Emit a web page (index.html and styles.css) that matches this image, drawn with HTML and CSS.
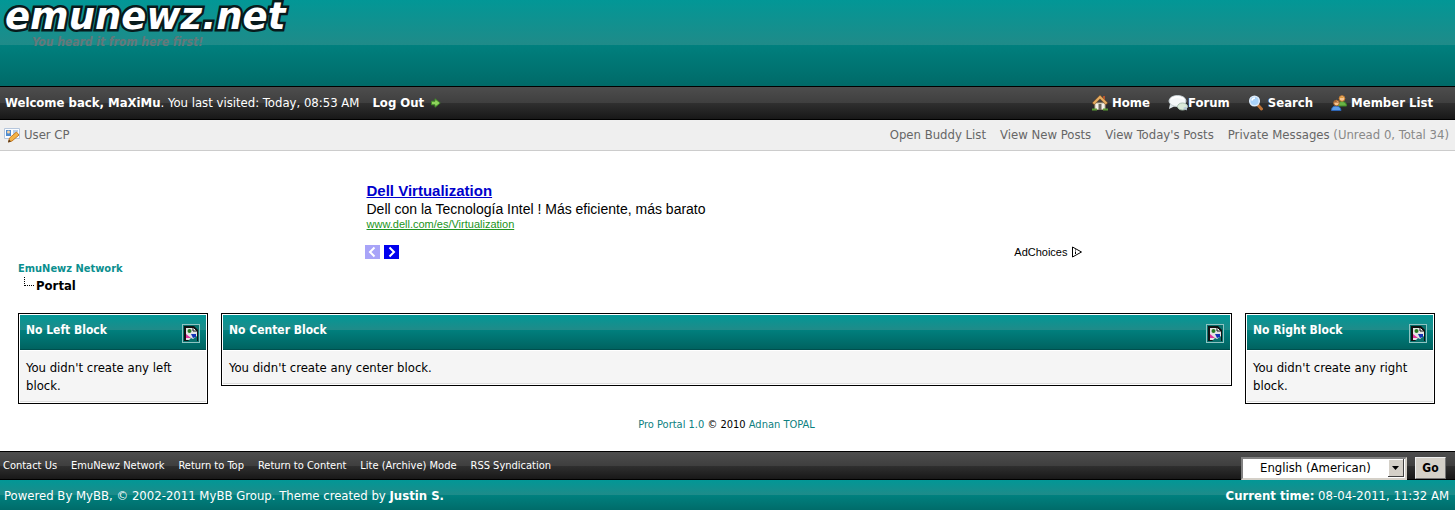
FILE: index.html
```
<!DOCTYPE html>
<html lang="en">
<head>
  <meta charset="UTF-8">
  <title>EmuNewz Network - Portal</title>
  <link rel="stylesheet" href="styles.css">
</head>
<body>

  <header class="header" id="top">
    <a class="logo" href="#">emunewz.net</a>
    <p class="slogan">You heard it from here first!</p>
  </header>

  <div class="menu">
    <div class="welcome">
      <span><strong>Welcome back, MaXiMu</strong>. You last visited: Today, 08:53 AM</span>
      <a class="logout" href="#">Log Out
        <svg width="10" height="10" viewBox="0 0 10 10"><path d="M.5 3.2H4V.8L9.2 5 4 9.2V6.8H.5z" fill="#8ed35c" stroke="#3f8a27"/></svg>
      </a>
    </div>
    <nav class="menu-links">
      <a href="#">
        <svg width="16" height="16" viewBox="0 0 16 16">
          <path d="M3 8h10v6.500H3z" fill="#f4f1e8" stroke="#b9ab8b"/>
          <path d="M11 1h2v4h-2z" fill="#b5552d"/>
          <path d="M1 9l7-7 7 7" fill="none" stroke="#8c5a26" stroke-width="3"/>
          <path d="M1.500 8.500L8 2l6.500 6.500" fill="none" stroke="#e6ad62" stroke-width="2"/>
          <path d="M6.500 9h3v6h-3z" fill="#6e675d"/>
          <path d="M0 14.500h5M11 14.500h5" stroke="#5a9b35" stroke-width="2"/>
        </svg>
        <span>Home</span>
      </a>
      <a class="forum" href="#">
        <svg width="20" height="16" viewBox="0 0 20 16">
          <path d="M2 9l-1 5 6-3z" fill="#dfe9ec"/>
          <ellipse cx="9.500" cy="6" rx="8.500" ry="5.500" fill="#f3f7f8" stroke="#c8d3d6"/>
          <path d="M3 4q6-4 13 0" fill="none" stroke="#fff" stroke-width="2"/>
          <ellipse cx="14.500" cy="11.500" rx="5" ry="3.500" fill="#d9ead8" stroke="#a9bfb0"/>
          <path d="M15 13l4 2.500-.5-4z" fill="#b7c7d8"/>
        </svg>
        <span>Forum</span>
      </a>
      <a href="#">
        <svg width="16" height="16" viewBox="0 0 16 16">
          <path d="M9.500 9.500l4 4.500" stroke="#bf7438" stroke-width="3" stroke-linecap="round"/>
          <circle cx="6.500" cy="6" r="4.800" fill="#a9d3fa" stroke="#dcecfb" stroke-width="1.500"/>
          <path d="M3.800 5.500q.8-2.500 3.200-2.500" fill="none" stroke="#fff" stroke-width="1.500"/>
        </svg>
        <span>Search</span>
      </a>
      <a href="#">
        <svg width="16" height="16" viewBox="0 0 16 16">
          <path d="M6.500 11q0-4.500 4.500-4.500t4.500 4.500z" fill="#69b345" stroke="#3f8529"/>
          <circle cx="11" cy="3.500" r="2.800" fill="#f6c58f" stroke="#c57a30"/>
          <path d="M8.500 3q1-3 5 0" fill="#e19a3a"/>
          <path d="M.5 15.500q0-4.500 4.500-4.500t5 4.500z" fill="#5b9de8" stroke="#2e65b5"/>
          <circle cx="5.500" cy="8" r="2.800" fill="#f6c58f" stroke="#a4622a"/>
          <path d="M3 7.500q1-3 5 0" fill="#9c5426"/>
        </svg>
        <span>Member List</span>
      </a>
    </nav>
  </div>

  <div class="panel">
    <a class="usercp" href="#">
      <svg width="16" height="16" viewBox="0 0 16 16">
        <path d="M.5 1.500h15v10H.5z" fill="#fafcff" stroke="#b5c6dc"/>
        <path d="M2 3h5v6H2z" fill="#4d8bd0"/>
        <circle cx="4.500" cy="5" r="1.500" fill="#f4d1a4"/>
        <path d="M9 4h5M9 6h4" stroke="#6f9fd4"/>
        <path d="M4.500 15l1-4 7-6 2.500 3-7 6z" fill="#f4b447" stroke="#c67b24"/>
        <path d="M4 15.500l1-3 2 2z" fill="#553a22"/>
      </svg>
      <span>User CP</span>
    </a>
    <nav class="panel-links">
      <a href="#">Open Buddy List</a>
      <a href="#">View New Posts</a>
      <a href="#">View Today's Posts</a>
      <span><a href="#">Private Messages</a> (Unread 0, Total 34)</span>
    </nav>
  </div>

  <main class="content" id="content">
    <section class="ad">
      <a class="ad-title" href="#">Dell Virtualization</a>
      <p class="ad-text">Dell con la Tecnología Intel ! Más eficiente, más barato</p>
      <a class="ad-url" href="#">www.dell.com/es/Virtualization</a>
      <div class="ad-footer">
        <div class="ad-arrows">
          <button type="button" class="prev" aria-label="Previous ad" disabled>
            <svg width="15" height="14" viewBox="0 0 15 14"><path d="M9.500 2.500L5 7l4.500 4.500" fill="none" stroke="#fff" stroke-width="2"/></svg>
          </button>
          <button type="button" aria-label="Next ad">
            <svg width="15" height="14" viewBox="0 0 15 14"><path d="M5.500 2.500L10 7l-4.500 4.500" fill="none" stroke="#fff" stroke-width="2"/></svg>
          </button>
        </div>
        <a class="adchoices" href="#">AdChoices
          <svg width="12" height="12" viewBox="0 0 12 12"><path d="M1.500 1v10l9-5z" fill="none" stroke="#000"/><path d="M4.500 3.500v1M4.500 5.500V8" stroke="#000"/></svg>
        </a>
      </div>
    </section>

    <nav class="breadcrumb">
      <a href="#">EmuNewz Network</a>
      <div class="active">
        <svg width="10" height="10" viewBox="0 0 10 10"><path d="M.5 0v9M1 8.500h9" fill="none" stroke="#000" stroke-dasharray="1 1"/></svg>
        <span>Portal</span>
      </div>
    </nav>

    <div class="blocks">
      <section class="block">
        <div class="thead">
          <h2>No Left Block</h2>
          <button type="button" class="toggle" aria-label="Collapse left block"><svg width="16" height="17" viewBox="0 0 16 17"><use href="#collapse"/></svg></button>
        </div>
        <p>You didn't create any left block.</p>
      </section>
      <section class="block">
        <div class="thead">
          <h2>No Center Block</h2>
          <button type="button" class="toggle" aria-label="Collapse center block"><svg width="16" height="17" viewBox="0 0 16 17"><use href="#collapse"/></svg></button>
        </div>
        <p>You didn't create any center block.</p>
      </section>
      <section class="block">
        <div class="thead">
          <h2>No Right Block</h2>
          <button type="button" class="toggle" aria-label="Collapse right block"><svg width="16" height="17" viewBox="0 0 16 17"><use href="#collapse"/></svg></button>
        </div>
        <p>You didn't create any right block.</p>
      </section>
    </div>

    <p class="copyright"><a href="#">Pro Portal 1.0</a> © 2010 <a href="#">Adnan TOPAL</a></p>
  </main>

  <footer>
    <div class="bottom-menu">
      <nav class="bottom-links">
        <a href="#">Contact Us</a>
        <a href="#">EmuNewz Network</a>
        <a href="#top">Return to Top</a>
        <a href="#content">Return to Content</a>
        <a href="#">Lite (Archive) Mode</a>
        <a href="#">RSS Syndication</a>
      </nav>
      <form class="language">
        <div class="select">
          <select name="language" aria-label="Language">
            <option>English (American)</option>
          </select>
          <svg width="16" height="18" viewBox="0 0 16 18">
            <path d="M0 0h16v18H0z" fill="#404040"/>
            <path d="M0 0h15v17H0z" fill="#fff"/>
            <path d="M1 1h14v16H1z" fill="#d4d0c8"/>
            <path d="M4 7h7L7.500 11z" fill="#000"/>
          </svg>
        </div>
        <button type="button">Go</button>
      </form>
    </div>
    <div class="credits">
      <span>Powered By MyBB, © 2002-2011 MyBB Group. Theme created by <a href="#">Justin S.</a></span>
      <span><strong>Current time:</strong> 08-04-2011, 11:32 AM</span>
    </div>
  </footer>

  <!-- collapse icon -->
  <svg class="symbols">
    <symbol id="collapse" viewBox="0 0 16 17">
      <path d="M1 1h10l4 4v11H1z" fill="#111"/>
      <path d="M3 3h8l3 3v9H3z" fill="#e4e4e4"/>
      <path d="M10 2l4 4h-4z" fill="#fff" stroke="#111"/>
      <circle cx="6.500" cy="6" r="2" fill="#257c20"/>
      <path d="M3 9l5 4H3z" fill="#e0359d"/>
      <path d="M8 9h5v3l-3 1z" fill="#1334b4"/>
      <path d="M5 16l3-3 2 1 4-3v5z" fill="#08706c"/>
    </symbol>
  </svg>

</body>
</html>
```
FILE: styles.css
```
body {
  margin: 0;
  background: #fff;
  color: #000;
  font-family: Tahoma, "DejaVu Sans Condensed", "DejaVu Sans", sans-serif;
  font-stretch: condensed;
  font-size: 13px;
  line-height: 18px;
}

a {
  color: inherit;
  text-decoration: none;
}

p, h2 {
  margin: 0;
}

svg {
  display: block;
  flex: none;
}

.symbols {
  display: none;
}

/* header */
.header {
  height: 86px;
  background: linear-gradient(#029796, #1f8b89 52%, #00807e 52%, #006a68);
}

.logo {
  display: block;
  padding-left: 5px;
  font-family: "DejaVu Sans", sans-serif;
  font-stretch: normal;
  font-size: 37px;
  font-weight: bold;
  font-style: italic;
  line-height: 34px;
  color: #fff;
  -webkit-text-stroke: 5px #071a1c;
  paint-order: stroke fill;
}

.slogan {
  padding-left: 32px;
  font-size: 12px;
  line-height: 16px;
  font-weight: bold;
  font-style: italic;
  color: #64787a;
}

/* bars */
.menu, .panel, .bottom-menu, .credits {
  display: flex;
  justify-content: space-between;
  align-items: center;
}

.menu, .bottom-menu {
  color: #fff;
  background: linear-gradient(#4d4d4d, #3f3f3f 50%, #303030 50%, #181818);
  border-top: 1px solid #000;
  border-bottom: 1px solid #000;
}

.menu {
  height: 32px;
  padding: 0 22px 0 5px;
}

.welcome, .logout, .menu-links, .menu-links a, .usercp {
  display: flex;
  align-items: center;
}

.welcome {
  gap: 13px;
}

.logout {
  gap: 7px;
  font-weight: bold;
}

.menu-links {
  gap: 18px;
  font-weight: bold;
}

.menu-links a {
  gap: 4px;
}

.menu-links .forum {
  gap: 0;
}

.panel {
  height: 30px;
  padding: 0 6px 0 4px;
  background: #efefef;
  border-bottom: 1px solid #ccc;
  color: #888;
}

.panel a {
  color: #666;
}

.usercp {
  gap: 4px;
}

.panel-links {
  display: flex;
  gap: 14px;
}

/* content */
.content {
  padding: 31px 20px 17px 18px;
}

.ad {
  max-width: 724px;
  margin: 0 auto;
  font-family: Arial, "Liberation Sans", sans-serif;
  font-stretch: normal;
}

.ad-title, .ad-text, .ad-url {
  display: block;
  padding-left: 2px;
}

.ad-title {
  font-size: 15px;
  font-weight: bold;
  color: #00c;
  text-decoration: underline;
}

.ad-text {
  font-size: 14px;
}

.ad-url {
  font-size: 11px;
  line-height: 12px;
  color: #219421;
  text-decoration: underline;
}

.ad-footer {
  display: flex;
  justify-content: space-between;
  align-items: center;
  padding: 13px 6px 0 0;
}

.ad-arrows {
  display: flex;
  gap: 4px;
}

.ad-arrows button {
  padding: 0;
  border: 0;
  background: #00e;
}

.ad-arrows .prev {
  background: #a8a4f8;
}

.adchoices {
  display: flex;
  align-items: center;
  gap: 3px;
  font-size: 11px;
}

.breadcrumb {
  font-weight: bold;
}

.breadcrumb a {
  display: block;
  font-size: 11px;
  line-height: 16px;
  color: #0c8f8f;
}

.active {
  display: flex;
  gap: 2px;
  padding-left: 6px;
}

.blocks {
  display: grid;
  grid-template-columns: 190px 1fr 190px;
  align-items: start;
  gap: 13px;
  margin-top: 18px;
}

.block {
  padding: 1px;
  border: 1px solid #000;
}

.thead {
  display: flex;
  justify-content: space-between;
  height: 34px;
  padding: 0 6px;
  border-bottom: 1px solid #004f4e;
  background: linear-gradient(#029796, #1f8b89 43%, #00807e 43%, #006360);
  color: #fff;
}

.thead h2 {
  font-size: 12px;
  line-height: 31px;
}

.toggle {
  align-self: center;
  margin-top: 2px;
  padding: 0;
  border: 1px solid #8fc4c2;
  background: #08706c;
}

.block p {
  margin-top: 1px;
  padding: 8px 6px 6px;
  background: #f5f5f5;
  border-bottom: 1px solid #ddd;
}

.copyright {
  margin-top: 12px;
  font-size: 11px;
  text-align: center;
}

.copyright a {
  color: #0c8080;
}

/* footer */
.bottom-menu {
  height: 27px;
  padding: 0 9px 0 3px;
  font-size: 11px;
}

.bottom-links {
  display: flex;
  gap: 14px;
}

.language {
  display: flex;
  align-items: start;
  gap: 8px;
  height: 18px;
}

.select {
  position: relative;
}

.select svg {
  position: absolute;
  top: 2px;
  right: 3px;
}

.language select {
  appearance: none;
  display: block;
  box-sizing: border-box;
  width: 166px;
  height: 23px;
  padding: 0 17px;
  border: 2px solid #808080;
  border-right-color: #d4d0c8;
  border-bottom-color: #d4d0c8;
  border-radius: 0;
  background: #fff;
  color: #000;
  font: inherit;
  font-size: 13px;
}

.language button {
  width: 31px;
  height: 22px;
  padding: 0;
  border: 1px solid #eee;
  border-right-color: #777;
  border-bottom-color: #777;
  background: #d4d0c8;
  color: #000;
  font: inherit;
  font-size: 12px;
  font-weight: bold;
}

.credits {
  height: 31px;
  padding: 0 6px 0 4px;
  background: linear-gradient(#029796, #1f8b89 50%, #00807e 50%, #006a68);
  color: #fff;
}

.credits a {
  font-weight: bold;
}
```
